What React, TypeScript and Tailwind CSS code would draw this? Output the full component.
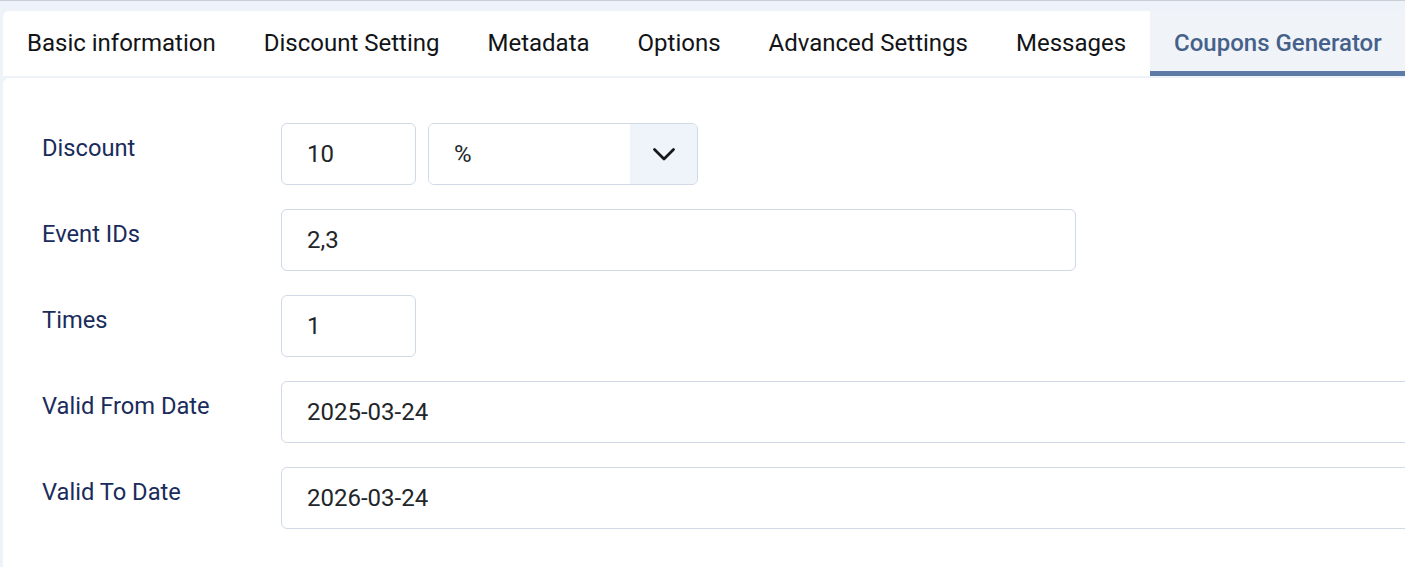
const TABS = [
  'Basic information',
  'Discount Setting',
  'Metadata',
  'Options',
  'Advanced Settings',
  'Messages',
  'Coupons Generator',
];

function Row({ label, children }: { label: string; children: React.ReactNode }) {
  return (
    <div className="flex items-start">
      <div className="w-[239px] shrink-0 pt-[10px] text-[23.7px] leading-[30px] text-[#1a2c5b]">{label}</div>
      {children}
    </div>
  );
}

function Field({ value, className }: { value: string; className: string }) {
  return (
    <div
      className={`flex h-[62px] items-center rounded-[6px] border border-[#d0d9e6] bg-white px-[25px] text-[24px] text-[#22262a] ${className}`}
    >
      {value}
    </div>
  );
}

export default function App() {
  return (
    <div
      className="h-[567px] w-[1405px] overflow-hidden border-t border-[#c9ced6] bg-[#eef2f9] pt-[10px] pl-[3px]"
      style={{ fontFamily: 'Roboto, "Liberation Sans", sans-serif' }}
    >
      <div className="flex h-[65px] rounded-tl-[6px] bg-white">
        {TABS.map((tab, i) => {
          const active = i === TABS.length - 1;
          return (
            <div
              key={tab}
              className={`flex items-center px-[24px] text-[24px] whitespace-nowrap ${
                active
                  ? 'flex-1 border-b-[5px] border-[#5c7ba6] bg-[#f0f4f9] pt-[3px] font-medium text-[#456189]'
                  : 'pb-[2px] text-[#121417]'
              }`}
            >
              {tab}
            </div>
          );
        })}
      </div>

      <div className="mt-[2px] flex h-[500px] flex-col gap-[24px] rounded-tl-[6px] bg-white pt-[45px] pl-[39px]">
        <Row label="Discount">
          <Field value="10" className="w-[135px]" />
          <div className="ml-[12px] flex h-[62px] w-[270px] overflow-hidden rounded-[6px] border border-[#d0d9e6]">
            <div className="flex flex-1 items-center bg-white px-[25px] text-[24px] text-[#22262a]">%</div>
            <div className="flex w-[67px] items-center justify-center bg-[#eff3fa]">
              <svg width="24" height="14" viewBox="0 0 24 14" fill="none">
                <path d="M2.5 2.5l9.5 9.5 9.5-9.5" stroke="#15171b" strokeWidth="2.8" strokeLinecap="round" strokeLinejoin="round" />
              </svg>
            </div>
          </div>
        </Row>
        <Row label="Event IDs">
          <Field value="2,3" className="w-[795px]" />
        </Row>
        <Row label="Times">
          <Field value="1" className="w-[135px]" />
        </Row>
        <Row label="Valid From Date">
          <Field value="2025-03-24" className="w-[1200px] shrink-0" />
        </Row>
        <Row label="Valid To Date">
          <Field value="2026-03-24" className="w-[1200px] shrink-0" />
        </Row>
      </div>
    </div>
  );
}
